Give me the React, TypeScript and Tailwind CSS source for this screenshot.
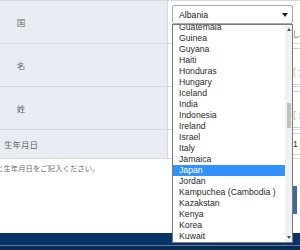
const countries = [
  'Guatemala',
  'Guinea',
  'Guyana',
  'Haiti',
  'Honduras',
  'Hungary',
  'Iceland',
  'India',
  'Indonesia',
  'Ireland',
  'Israel',
  'Italy',
  'Jamaica',
  'Japan',
  'Jordan',
  'Kampuchea (Cambodia )',
  'Kazakstan',
  'Kenya',
  'Korea',
  'Kuwait',
  'Kyrgyzstan',
];

const jp = { fontFamily: '"Noto Sans CJK JP", "Noto Sans", sans-serif' };
const latin = { fontFamily: '"Liberation Sans", Arial, sans-serif' };

const Label: React.FC<{ text: string }> = ({ text }) => (
  <div className="flex w-[168px] shrink-0 items-center border-r border-[#d5d9e0] bg-[#e9edf3]">
    <span className="w-[42px] text-center text-[8.5px] leading-[10px] text-[#666]" style={jp}>
      {text}
    </span>
  </div>
);

export default function App() {
  return (
    <div className="relative flex h-[250px] w-[300px] flex-col overflow-hidden bg-white">
      {/* form table */}
      <div className="border-t border-[#d5d9e0]">
        <div className="flex h-[43px] border-b border-[#d5d9e0]">
          <Label text="国" />
          <div className="flex flex-col pl-[4px] pt-[4px]">
            <div className="flex h-[19px] w-[121px] items-center justify-between rounded-[2px] border border-[#a9a9a9] bg-white pl-[6px] pr-[4px]">
              <span className="text-[8.7px] leading-[10px] text-[#222]" style={latin}>
                Albania
              </span>
              <svg width="6" height="4" viewBox="0 0 6 4">
                <path d="M0 0h6L3 4z" fill="#222" />
              </svg>
            </div>
            <span className="mt-[4px] whitespace-nowrap pl-[1px] text-[8.5px] leading-[10px] text-[#777]" style={jp}>
              住所の国をリストから選択。正しい国名
            </span>
          </div>
        </div>

        <div className="flex h-[43px] border-b border-[#d5d9e0]">
          <Label text="名" />
          <div className="flex flex-1 pl-[4px] pt-[4px]">
            <div className="flex h-[37px] w-[300px] items-end border border-[#cfd3d9] pb-[8px] pl-[120px]">
              <span className="whitespace-nowrap text-[8.5px] leading-[10px] text-[#999]" style={jp}>
                [ カナ
              </span>
            </div>
          </div>
        </div>

        <div className="flex h-[43px] border-b border-[#d5d9e0]">
          <Label text="姓" />
          <div className="flex flex-1 pl-[4px] pt-[4px]">
            <div className="flex h-[37px] w-[300px] items-end border border-[#cfd3d9] pb-[8px] pl-[120px]">
              <span className="whitespace-nowrap text-[8.5px] leading-[10px] text-[#999]" style={jp}>
                [ カナ
              </span>
            </div>
          </div>
        </div>

        <div className="flex h-[29px] border-b border-[#d5d9e0]">
          <Label text="生年月日" />
          <div className="flex flex-1 items-center pl-[120px]">
            <div className="flex h-[22px] w-[60px] items-center border border-[#cfd3d9] pl-[4px]">
              <span className="text-[8.7px] leading-[10px] text-[#333]" style={latin}>
                1
              </span>
            </div>
          </div>
        </div>
      </div>

      {/* note */}
      <p className="ml-[-11.4px] mt-[4px] whitespace-nowrap text-[7.4px] leading-[10px] text-[#756a64]" style={jp}>
        姓と生年月日をご記入ください。
      </p>

      {/* submit button */}
      <div className="mt-[13px] flex justify-end pr-[3px]">
        <button className="h-[28px] w-[110px] bg-[#3b6b9c] text-[9px] text-white" style={jp}>
          確認する
        </button>
      </div>

      {/* footer bar */}
      <div className="mt-[19px]">
        <div className="h-[12px] bg-[#0a3468]" />
        <div className="h-[1px] bg-[#5a7aa0]" />
        <div className="h-[4px] bg-[#0b2a52]" />
      </div>

      {/* open dropdown list */}
      <div className="absolute left-[172px] top-[24px] h-[219px] w-[121px] overflow-hidden border border-[#7a7a7a] bg-white">
        <div className="mt-[-3px] w-[112px]">
          {countries.map((c) => (
            <div
              key={c}
              className={
                c === 'Japan'
                  ? 'h-[11px] whitespace-nowrap bg-[#3390ff] pl-[6px] text-[8.7px] leading-[11px] text-white'
                  : 'h-[11px] whitespace-nowrap pl-[6px] text-[8.7px] leading-[11px] text-[#2b2b2b]'
              }
              style={latin}
            >
              {c}
            </div>
          ))}
        </div>
        <div className="absolute bottom-0 right-0 top-0 w-[7px] bg-[#f1f1f1]">
          <svg className="absolute left-[1.5px] top-[3px]" width="4" height="3" viewBox="0 0 4 3">
            <path d="M2 0L4 3H0z" fill="#505050" />
          </svg>
          <div className="absolute left-[1.5px] top-[78px] h-[25px] w-[4px] bg-[#c1c1c1]" />
          <svg className="absolute bottom-[3px] left-[1.5px]" width="4" height="3" viewBox="0 0 4 3">
            <path d="M0 0h4L2 3z" fill="#505050" />
          </svg>
        </div>
      </div>
    </div>
  );
}
